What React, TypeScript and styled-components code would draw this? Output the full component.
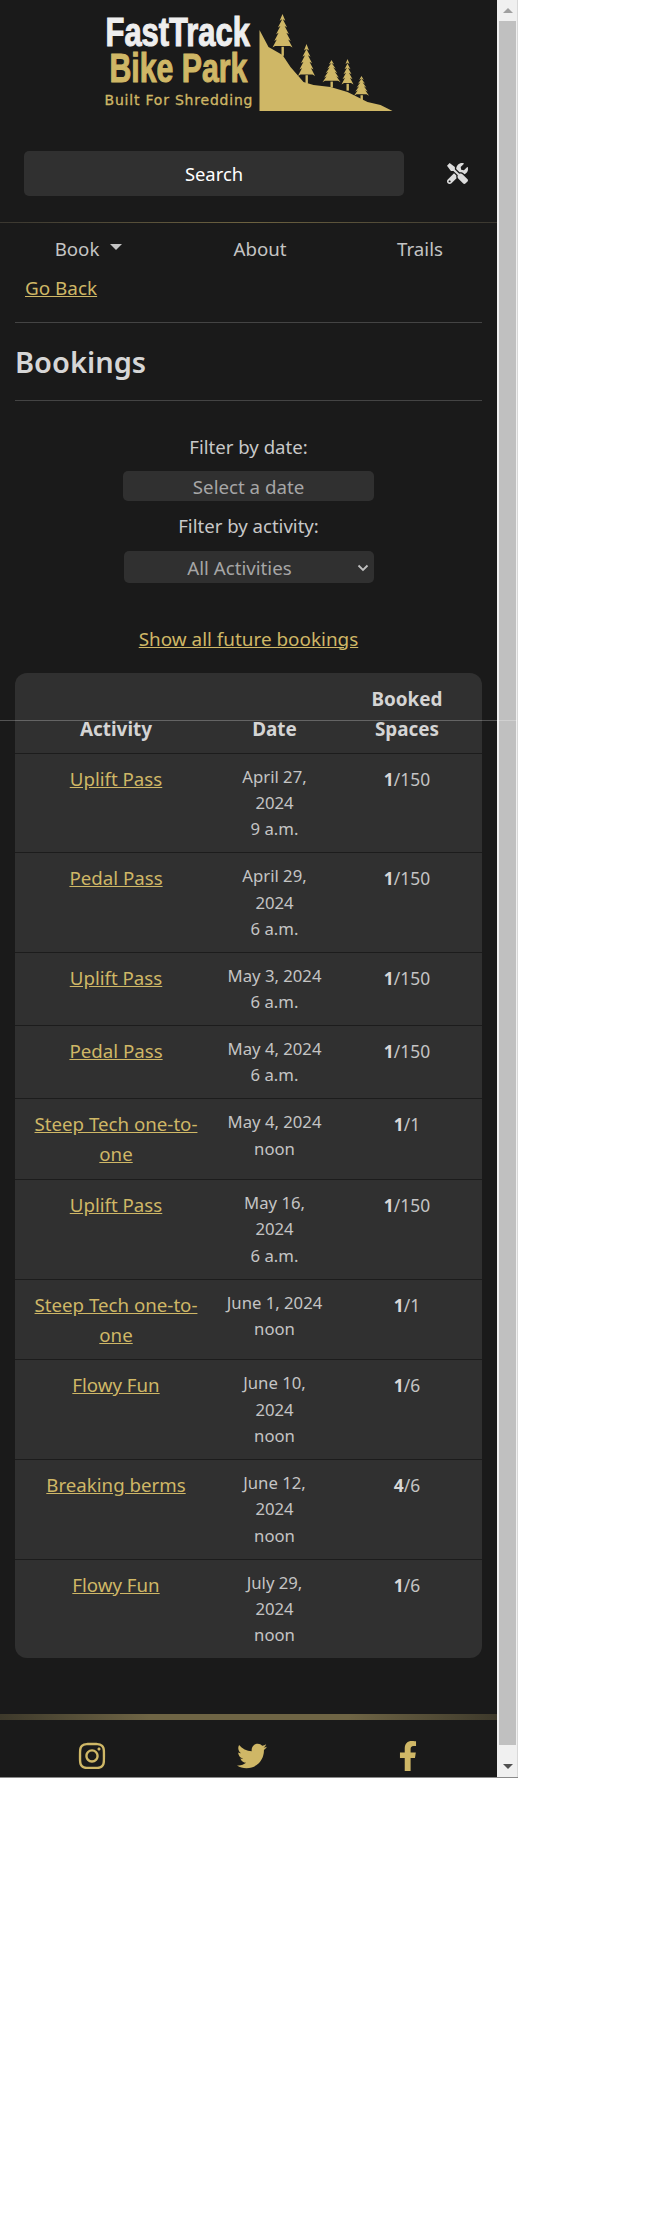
import React from "react";
import styled, { createGlobalStyle } from "styled-components";
import { FaInstagram, FaTwitter, FaFacebookF, FaTools } from "react-icons/fa";

const Global = createGlobalStyle`
  html, body { margin: 0; padding: 0; background: #fff; }
  body { font-family: "Noto Sans", "Open Sans", sans-serif; }
`;

const Frame = styled.div`
  position: relative;
  display: flex;
  width: 518px;
  height: 1778px;
  border-bottom: 1px solid #8a8a8a;
  box-sizing: border-box;
`;
const CrossLine = styled.div`
  position: absolute;
  left: 0;
  top: 720px;
  width: 517px;
  height: 1px;
  background: rgba(255, 255, 255, 0.25);
`;
const Page = styled.div`
  width: 497px;
  background: #1a1a1a;
  color: #d0d0d0;
  display: flex;
  flex-direction: column;
  font-size: 18.7px;
  overflow: hidden;
`;
const Scrollbar = styled.div`
  width: 21px;
  background: #f0f0f0;
  padding-left: 2px;
  border-right: 1px solid #d8d8d8;
  box-sizing: border-box;
  display: flex;
  flex-direction: column;
  align-items: flex-start;
`;
const ScrollArrow = styled.div<{ $up?: boolean }>`
  height: 21px;
  width: 100%;
  display: flex;
  align-items: center;
  justify-content: center;
  &::before {
    content: "";
    border-left: 5px solid transparent;
    border-right: 5px solid transparent;
    ${(p) => (p.$up ? "border-bottom: 5px solid #a0a0a0;" : "border-top: 5px solid #505050;")}
  }
`;
const ScrollThumb = styled.div`
  width: 17px;
  height: 1724px;
  background: #c0c0c0;
`;
const ScrollRest = styled.div`
  flex: 1;
`;

const Header = styled.div`
  display: flex;
  justify-content: center;
  height: 151px;
`;
const SearchRow = styled.div`
  display: flex;
  align-items: center;
  padding: 0 0 0 24px;
  height: 45px;
`;
const SearchButton = styled.div`
  width: 380px;
  height: 45px;
  border-radius: 5px;
  background: #303030;
  color: #fff;
  display: flex;
  align-items: center;
  justify-content: center;
  font-size: 18.4px;
`;
const ToolsLink = styled.div`
  margin-left: 43px;
  color: #dcdcdc;
  font-size: 21px;
  display: flex;
`;
const GoldRule = styled.div`
  height: 1px;
  margin-top: 26px;
  background: linear-gradient(90deg, #3a3730, #6d6240 50%, #3a3730);
`;
const Nav = styled.div`
  display: flex;
  height: 50px;
  align-items: center;
  font-size: 18.7px;
  color: #c4c4c4;
`;
const NavItem = styled.div<{ $w: number }>`
  width: ${(p) => p.$w}px;
  display: flex;
  justify-content: center;
  align-items: center;
  gap: 11px;
`;
const Caret = styled.span`
  border-left: 6px solid transparent;
  border-right: 6px solid transparent;
  border-top: 6px solid #c4c4c4;
  margin-top: -2px;
`;
const GoBack = styled.a`
  color: #cfb766;
  text-decoration: underline;
  font-size: 18.9px;
  margin-left: 25px;
  line-height: 30.6px;
  display: block;
`;
const Content = styled.div`
  padding: 0 15px;
  display: flex;
  flex-direction: column;
`;
const Hr = styled.div<{ $top?: number }>`
  height: 1px;
  background: #444;
  margin-top: ${(p) => p.$top ?? 0}px;
`;
const Title = styled.h2`
  margin: 0;
  height: 77px;
  display: flex;
  align-items: center;
  font-size: 29px;
  font-weight: 600;
  color: #d6d6d6;
`;
const Filters = styled.div`
  display: flex;
  flex-direction: column;
  align-items: center;
  padding-top: 31px;
`;
const Label = styled.label`
  font-size: 18.6px;
  line-height: 30.6px;
  color: #c8c8c8;
`;
const DateField = styled.div`
  width: 251px;
  height: 30px;
  margin: 9px 0 10px;
  background: #303030;
  border-radius: 5px;
  color: #a6a6a6;
  font-size: 18.7px;
  display: flex;
  align-items: center;
  justify-content: center;
`;
const SelectField = styled.div`
  position: relative;
  width: 250px;
  height: 32px;
  margin: 9px 0 0;
  padding: 2px 18px 0 0;
  box-sizing: border-box;
  background: #303030;
  border-radius: 5px;
  color: #a6a6a6;
  font-size: 18.7px;
  display: flex;
  align-items: center;
  justify-content: center;
`;
const Chevron = styled.svg`
  position: absolute;
  right: 5px;
  top: 13px;
`;
const ShowAll = styled.a`
  align-self: center;
  margin-top: 41px;
  color: #cfb766;
  text-decoration: underline;
  font-size: 18.9px;
  line-height: 30.6px;
`;
const Table = styled.div`
  margin-top: 19px;
  background: #303030;
  border-radius: 12px;
  display: flex;
  flex-direction: column;
`;
const Row = styled.div<{ $head?: boolean }>`
  display: grid;
  grid-template-columns: 202px 115px 150px;
  text-align: center;
  border-top: ${(p) => (p.$head ? "none" : "1px solid #1c1c1c")};
  padding: ${(p) => (p.$head ? "10.5px 0 7.5px" : "10px 0 9.4px")};
  font-size: 16.7px;
  line-height: 26.4px;
  ${(p) => (p.$head ? "align-items: end; font-weight: 700; font-size: 18.9px; line-height: 30.6px; color: #d4d4d4;" : "")}
`;
const ActivityCell = styled.div`
  padding: 0 14px;
  font-size: 18.7px;
  line-height: 30.2px;
`;
const ActivityLink = styled.a`
  color: #cfb766;
  text-decoration: underline;
`;
const DateCell = styled.div`
  white-space: nowrap;
  color: #c4c4c4;
`;
const Spaces = styled.div`
  padding-top: 2px;
  font-size: 17.4px;
  color: #c4c4c4;
  strong { font-weight: 700; color: #d8d8d8; }
`;
const Footer = styled.div`
  margin-top: auto;
  display: flex;
  flex-direction: column;
`;
const FootRule = styled.div`
  height: 6px;
  background: linear-gradient(90deg, #3d392b, #6f6545 30%, #6f6545 70%, #3d392b);
  filter: blur(0.6px);
`;
const Socials = styled.div`
  height: 57px;
  box-sizing: border-box;
  padding-top: 21px;
  display: grid;
  grid-template-columns: 183px 138px 174px;
  align-items: start;
  justify-items: center;
  color: #cfb766;
  font-size: 30px;
`;

const LogoText = styled.text<{ $size: number; $fill: string }>`
  font-family: "Liberation Sans", sans-serif;
  font-weight: 700;
  font-size: ${(p) => p.$size}px;
  fill: ${(p) => p.$fill};
  stroke: ${(p) => p.$fill};
  stroke-width: 1.1px;
`;
const LogoTag = styled.text`
  font-family: "DejaVu Sans", sans-serif;
  font-size: 14px;
  fill: #cfb766;
  stroke: #cfb766;
  stroke-width: 0.3px;
`;

function Tree({ x, base, h, w }: { x: number; base: number; h: number; w: number }) {
  const top = base - h;
  const tiers = 5;
  let d = `M${x} ${top}`;
  for (let i = 1; i <= tiers; i++) {
    const yy = top + (h * 0.82 * i) / tiers;
    d += ` L${x + (w / 2) * (i / tiers) + 1} ${yy} L${x + (w / 2) * (i / tiers) - 1.5} ${yy - 1.5}`;
  }
  for (let i = tiers; i >= 1; i--) {
    const yy = top + (h * 0.82 * i) / tiers;
    d += ` L${x - (w / 2) * (i / tiers) + 1.5} ${yy - 1.5} L${x - (w / 2) * (i / tiers) - 1} ${yy}`;
  }
  d += " Z";
  return (
    <g fill="#cfb766">
      <path d={d} />
      <rect x={x - 1} y={base - h * 0.2} width={2.4} height={h * 0.22} />
    </g>
  );
}

function Logo() {
  return (
    <svg width="300" height="113" viewBox="98.5 0 300 113">
      <LogoText transform="translate(105 45.5) scale(0.773 1)" $size={40} $fill="#eeeeee">
        FastTrack
      </LogoText>
      <LogoText transform="translate(109 81.5) scale(0.738 1)" $size={41} $fill="#cfb766">
        Bike Park
      </LogoText>
      <LogoTag x="104" y="105" textLength="148" lengthAdjust="spacing">
        Built For Shredding
      </LogoTag>
      <path
        d="M259 30 L268 47 L282 55 L290 67 L303 82 L313 85 L330 87 L347 92 L367 102 L380 105 L392 111 L259 111 Z"
        fill="#cfb766"
      />
      <Tree x={282} base={55} h={41} w={18} />
      <Tree x={306} base={83} h={39} w={15} />
      <Tree x={331} base={87} h={27} w={16} />
      <Tree x={347} base={90} h={31} w={10} />
      <Tree x={361} base={100} h={24} w={13} />
    </svg>
  );
}

const rows: [string, string[], string, string][] = [
  ["Uplift Pass", ["April 27,", "2024", "9 a.m."], "1", "150"],
  ["Pedal Pass", ["April 29,", "2024", "6 a.m."], "1", "150"],
  ["Uplift Pass", ["May 3, 2024", "6 a.m."], "1", "150"],
  ["Pedal Pass", ["May 4, 2024", "6 a.m."], "1", "150"],
  ["Steep Tech one-to-one", ["May 4, 2024", "noon"], "1", "1"],
  ["Uplift Pass", ["May 16,", "2024", "6 a.m."], "1", "150"],
  ["Steep Tech one-to-one", ["June 1, 2024", "noon"], "1", "1"],
  ["Flowy Fun", ["June 10,", "2024", "noon"], "1", "6"],
  ["Breaking berms", ["June 12,", "2024", "noon"], "4", "6"],
  ["Flowy Fun", ["July 29,", "2024", "noon"], "1", "6"],
];

export default function App() {
  return (
    <>
      <Global />
      <Frame>
        <Page>
          <Header>
            <Logo />
          </Header>
          <SearchRow>
            <SearchButton>Search</SearchButton>
            <ToolsLink>
              <FaTools />
            </ToolsLink>
          </SearchRow>
          <GoldRule />
          <Nav>
            <NavItem $w={177}>
              Book <Caret />
            </NavItem>
            <NavItem $w={166}>About</NavItem>
            <NavItem $w={154}>Trails</NavItem>
          </Nav>
          <GoBack href="#">Go Back</GoBack>
          <Content>
            <Hr $top={18} />
            <Title>Bookings</Title>
            <Hr />
            <Filters>
              <Label>Filter by date:</Label>
              <DateField>Select a date</DateField>
              <Label>Filter by activity:</Label>
              <SelectField>
                All Activities
                <Chevron width="12" height="8" viewBox="0 0 12 8">
                  <path d="M1.5 1.5 L6 6 L10.5 1.5" fill="none" stroke="#c0c0c0" strokeWidth="1.8" />
                </Chevron>
              </SelectField>
            </Filters>
            <ShowAll href="#">Show all future bookings</ShowAll>
            <Table>
              <Row $head>
                <div>Activity</div>
                <div>Date</div>
                <div>
                  Booked
                  <br />
                  Spaces
                </div>
              </Row>
              {rows.map((r, i) => (
                <Row key={i}>
                  <ActivityCell>
                    <ActivityLink href="#">{r[0]}</ActivityLink>
                  </ActivityCell>
                  <DateCell>
                    {r[1].map((line, j) => (
                      <div key={j}>{line}</div>
                    ))}
                  </DateCell>
                  <Spaces>
                    <strong>{r[2]}</strong>/{r[3]}
                  </Spaces>
                </Row>
              ))}
            </Table>
          </Content>
          <Footer>
            <FootRule />
            <Socials>
              <FaInstagram />
              <FaTwitter />
              <FaFacebookF />
            </Socials>
          </Footer>
        </Page>
        <Scrollbar>
          <ScrollArrow $up />
          <ScrollThumb />
          <ScrollRest />
          <ScrollArrow />
        </Scrollbar>
        <CrossLine />
      </Frame>
    </>
  );
}
